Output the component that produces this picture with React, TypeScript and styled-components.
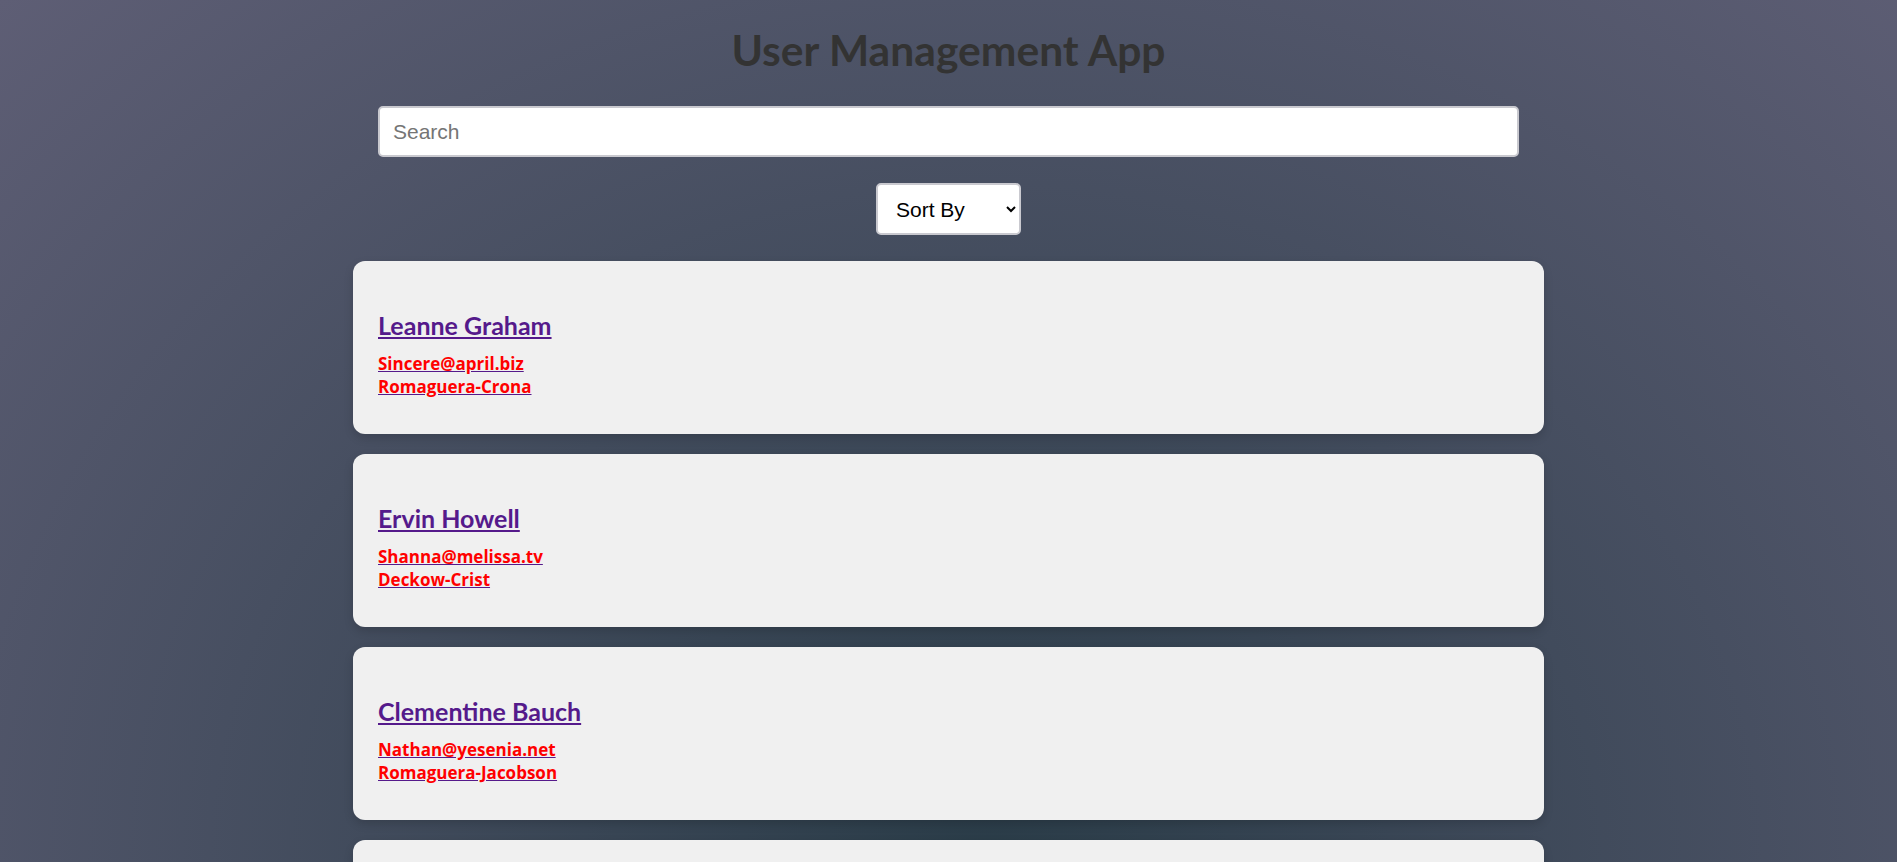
import styled, { createGlobalStyle } from "styled-components";
import { useState } from "react";

const GlobalStyle = createGlobalStyle`
  html, body {
    margin: 0;
    padding: 0;
  }
  body {
    min-height: 100vh;
    font-family: "Open Sans", "Noto Sans", sans-serif;
    background: radial-gradient(ellipse at 52% 100%, #2a3c48 0%, #5e5e75 100%) fixed;
  }
`;

const Page = styled.div`
  display: flex;
  flex-direction: column;
  align-items: center;
  padding-top: 26px;
  padding-bottom: 40px;
`;

const Title = styled.h1`
  margin: 0;
  font-family: Lato, "Open Sans", sans-serif;
  font-size: 42.6px;
  line-height: 48px;
  font-weight: 700;
  color: #333;
`;

const SearchInput = styled.input`
  box-sizing: border-box;
  width: 1141px;
  height: 51px;
  margin-top: 32px;
  padding: 0 13px;
  border: 2px solid #c9c9cf;
  border-radius: 5px;
  background: #fff;
  font-family: "Liberation Sans", Arial, sans-serif;
  font-size: 21px;
  color: #222;
  outline: none;

  &::placeholder {
    color: #757575;
  }
`;

const SortSelect = styled.select`
  box-sizing: border-box;
  width: 145px;
  height: 52px;
  margin-top: 26px;
  padding: 0 10px 0 14px;
  border: 2px solid #c9c9cf;
  border-radius: 5px;
  background: #fff;
  font-family: "Liberation Sans", Arial, sans-serif;
  font-size: 21px;
  color: #000;
`;

const List = styled.div`
  display: flex;
  flex-direction: column;
  gap: 20px;
  width: 1191px;
  margin-top: 26px;
`;

const Card = styled.a`
  display: block;
  box-sizing: border-box;
  height: 173px;
  padding: 49px 25px 0;
  border-radius: 12px;
  background: #f0f0f0;
  box-shadow: 0 4px 10px rgba(0, 0, 0, 0.15);
  color: #551a8b;
  text-decoration: underline;
  cursor: pointer;
`;

const Name = styled.h2`
  margin: 0 0 12px;
  font-family: Lato, "Open Sans", sans-serif;
  font-size: 25px;
  line-height: 30px;
  font-weight: 700;
`;

const Detail = styled.p`
  margin: 0;
  font-size: 17px;
  line-height: 23px;
  font-weight: 700;
  color: #ff0000;
`;

const users = [
  { name: "Leanne Graham", email: "Sincere@april.biz", company: "Romaguera-Crona" },
  { name: "Ervin Howell", email: "Shanna@melissa.tv", company: "Deckow-Crist" },
  { name: "Clementine Bauch", email: "Nathan@yesenia.net", company: "Romaguera-Jacobson" },
  { name: "Patricia Lebsack", email: "Julianne.OConner@kory.org", company: "Robel-Corkery" },
  { name: "Chelsey Dietrich", email: "Lucio_Hettinger@annie.ca", company: "Keebler LLC" },
  { name: "Mrs. Dennis Schulist", email: "Karley_Dach@jasper.info", company: "Considine-Lockman" },
  { name: "Kurtis Weissnat", email: "Telly.Hoeger@billy.biz", company: "Johns Group" },
  { name: "Nicholas Runolfsdottir V", email: "Sherwood@rosamond.me", company: "Abernathy Group" },
  { name: "Glenna Reichert", email: "Chaim_McDermott@dana.io", company: "Yost and Sons" },
  { name: "Clementina DuBuque", email: "Rey.Padberg@karina.biz", company: "Hoeger LLC" },
];

const App = () => {
  const [search, setSearch] = useState<string>("");
  const [sortBy, setSortBy] = useState<string>("");

  const shown = users
    .filter((u) => u.name.toLowerCase().includes(search.toLowerCase()))
    .sort((a, b) =>
      sortBy === "name"
        ? a.name.localeCompare(b.name)
        : sortBy === "email"
        ? a.email.localeCompare(b.email)
        : 0
    );

  return (
    <>
      <GlobalStyle />
      <Page>
        <Title>User Management App</Title>
        <SearchInput
          placeholder="Search"
          value={search}
          onChange={(e) => setSearch(e.target.value)}
        />
        <SortSelect value={sortBy} onChange={(e) => setSortBy(e.target.value)}>
          <option value="">Sort By</option>
          <option value="name">Name</option>
          <option value="email">Email</option>
        </SortSelect>
        <List>
          {shown.map((u) => (
            <Card key={u.email} href="#">
              <Name>{u.name}</Name>
              <Detail>{u.email}</Detail>
              <Detail>{u.company}</Detail>
            </Card>
          ))}
        </List>
      </Page>
    </>
  );
};

export default App;
